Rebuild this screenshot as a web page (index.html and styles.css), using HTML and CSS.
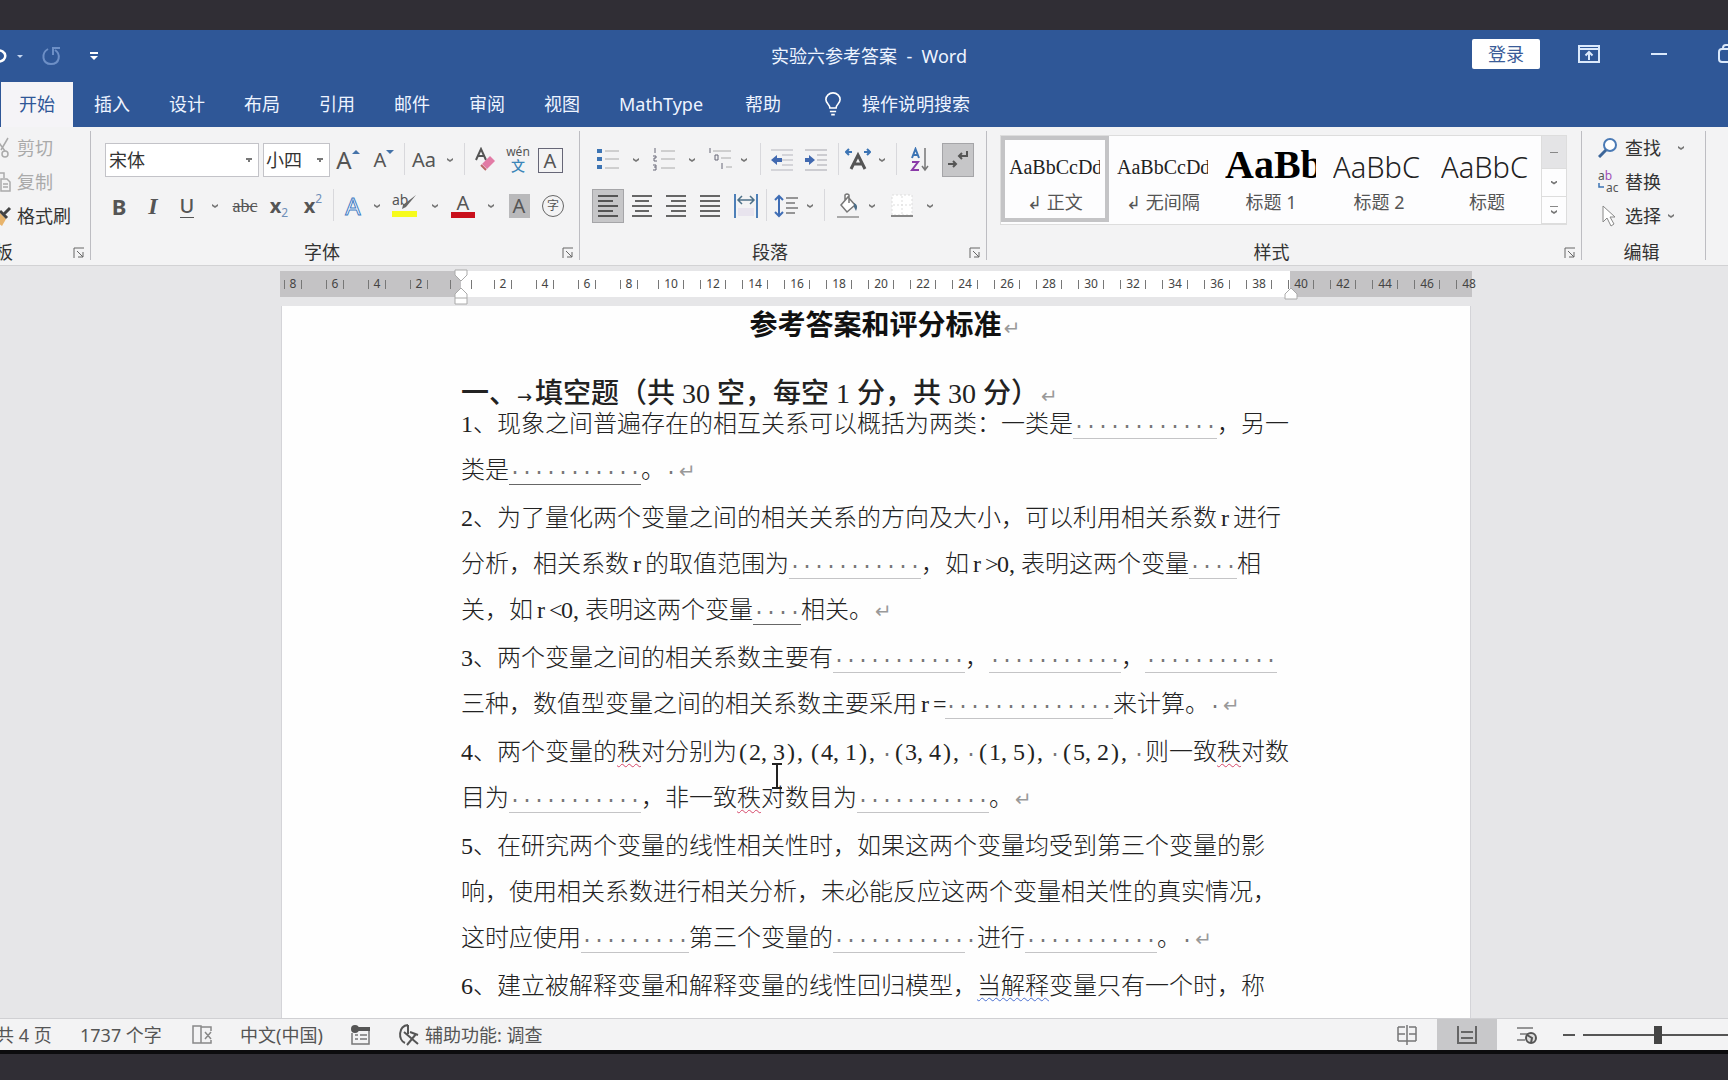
FILE: index.html
```html
<!DOCTYPE html>
<html lang="zh-CN">
<head>
<meta charset="utf-8">
<title>实验六参考答案 - Word</title>
<link rel="stylesheet" href="styles.css">
</head>
<body>
<header class="titlebar">
  <div class="quick">
    <button class="qbtn undo" aria-label="撤消"><svg width="8" height="20" viewBox="0 0 8 20"><path d="M-4 4.500C8 3 8 16-2 15.500" fill="none" stroke="#fff" stroke-width="2.500"/></svg></button>
    <button class="qbtn w24" aria-label="撤消选项"><i class="tri"></i></button>
    <button class="qbtn w40" aria-label="恢复"><svg width="22" height="22" viewBox="0 0 22 22"><path d="M7 4C0 8 1 19 10 19S20 9 14 5M12 10V3h7" fill="none" stroke="#6d8fc6" stroke-width="2"/></svg></button>
    <button class="qbtn w44" aria-label="自定义快速访问工具栏"><i class="bar"></i><i class="tri big"></i></button>
  </div>
  <div class="doc-title">实验六参考答案&nbsp; -&nbsp; Word</div>
  <div class="window">
    <button class="login">登录</button>
    <button class="qbtn" aria-label="功能区显示选项"><svg width="22" height="18" viewBox="0 0 22 18"><path d="M1 1h20v16H1zM1 4h20" fill="none" stroke="#dbe9fb" stroke-width="2"/><path d="M11 15V7M7.500 10.500L11 7l3.500 3.500" fill="none" stroke="#dbe9fb" stroke-width="2"/></svg></button>
    <button class="qbtn" aria-label="最小化"><svg width="16" height="18"><path d="M0 9h16" stroke="#dbe9fb" stroke-width="2"/></svg></button>
    <button class="qbtn" aria-label="还原"><svg width="22" height="20" viewBox="0 0 22 20"><path d="M5 5V4q0-3 3-3h10q3 0 3 3v9" fill="none" stroke="#dbe9fb" stroke-width="2"/><rect x="1" y="5" width="15" height="13" rx="3" fill="none" stroke="#dbe9fb" stroke-width="2"/></svg></button>
  </div>
</header>

<nav class="tabs">
  <button class="tab active">开始</button>
  <button class="tab">插入</button>
  <button class="tab">设计</button>
  <button class="tab">布局</button>
  <button class="tab">引用</button>
  <button class="tab">邮件</button>
  <button class="tab">审阅</button>
  <button class="tab">视图</button>
  <button class="tab wide">MathType</button>
  <button class="tab">帮助</button>
  <button class="tell"><svg width="18" height="24" viewBox="0 0 20 27"><path d="M6.500 18C6.500 14 2 13 2 8.500a8 7.500 0 0 1 16 0C18 13 13.500 14 13.500 18zM6.500 22h7M8 25.500h4" fill="none" stroke="#fff" stroke-width="1.800"/></svg><span>操作说明搜索</span></button>
</nav>

<section class="ribbon">
  <div class="group clip">
    <div class="stack">
      <button class="cmd off"><svg width="12" height="24" viewBox="0 0 12 24"><path d="M8 2L1 14M-3 4L5 15" stroke="#aaa" stroke-width="1.500"/><circle cx="5" cy="18" r="3" fill="none" stroke="#aaa" stroke-width="1.500"/></svg>剪切</button>
      <button class="cmd off"><svg width="12" height="24" viewBox="0 0 12 24"><path d="M-2 3h6v5M1 9h6l3 3v9H1zM3 14h5M3 17h5" fill="none" stroke="#aaa" stroke-width="1.500"/></svg>复制</button>
      <button class="cmd"><svg width="12" height="24" viewBox="0 0 12 24"><path d="M0 9l6 6-4 7-5-4z" fill="#e8b46c"/><path d="M0 7l7 7M4 10l6-6" stroke="#444" stroke-width="3"/></svg>格式刷</button>
    </div>
    <div class="foot"><span>剪贴板</span><button class="launch" aria-label="剪贴板选项"><svg width="12" height="12"><path d="M1 11V1h10M4 4l6 6M10 5v5H5" fill="none" stroke="#666"/></svg></button></div>
  </div>

  <div class="group font">
    <div class="row inset">
      <select class="box face" aria-label="字体"><option>宋体</option></select>
      <select class="box size" aria-label="字号"><option>小四</option></select>
      <button class="t w36" aria-label="增大字号"><span class="a24">A</span><svg class="up" width="8" height="6"><path d="M0 5l4-4 4 4z" fill="#4472a8"/></svg></button>
      <button class="t w36" aria-label="减小字号"><span class="a20">A</span><svg class="up" width="8" height="6"><path d="M0 1l4 4 4-4z" fill="#4472a8"/></svg></button>
      <i class="sep w4"></i>
      <button class="t w36 a20">Aa</button><button class="t w16" aria-label="更改大小写"><i class="v"></i></button>
      <i class="sep w12"></i>
      <button class="t w32" aria-label="清除格式"><svg width="22" height="26" viewBox="0 0 22 26"><path d="M1 13L6 2l5 11M3 9h6" fill="none" stroke="#555" stroke-width="2"/><path d="M7 17l8-8 5 5-8 8z" fill="#e27ba5"/><path d="M6 18l5 5" stroke="#b66" stroke-width="2"/></svg></button>
      <button class="t w32 pin"><span>wén</span><b>文</b></button>
      <button class="t w32"><span class="boxed">A</span></button>
    </div>
    <div class="row">
      <button class="t w32"><b class="a22">B</b></button>
      <button class="t w36"><b class="ital">I</b></button>
      <button class="t w32"><span class="under">U</span></button><button class="t w24" aria-label="下划线"><i class="v"></i></button>
      <button class="t w36"><s class="strike">abc</s></button>
      <button class="t w32 a20"><b>x</b><sub>2</sub></button>
      <button class="t w36 a20"><b>x</b><sup>2</sup></button>
      <i class="sep w4"></i>
      <button class="t w36"><span class="outline">A</span></button><button class="t w12" aria-label="文本效果"><i class="v"></i></button>
      <button class="t w44" aria-label="突出显示"><svg width="26" height="26" viewBox="0 0 26 26"><text x="0" y="12" class="abt">ab</text><path d="M24 2L14 14l-4 2 1-4z" fill="#666"/><path d="M0 18h25v6H0z" fill="#f6fb1c"/></svg></button><button class="t w16" aria-label="突出显示颜色"><i class="v"></i></button>
      <button class="t w40"><span class="red">A</span></button><button class="t w16" aria-label="字体颜色"><i class="v"></i></button>
      <button class="t w40"><span class="shade">A</span></button>
      <button class="t w28"><span class="ring">字</span></button>
    </div>
    <div class="foot"><span>字体</span><button class="launch" aria-label="字体选项"><svg width="12" height="12"><path d="M1 11V1h10M4 4l6 6M10 5v5H5" fill="none" stroke="#666"/></svg></button></div>
  </div>

  <div class="group para">
    <div class="row">
      <button class="t w32" aria-label="项目符号"><svg width="24" height="24"><path d="M1 3h5M1 11h5M1 19h5" stroke="#3c74b4" stroke-width="4"/><path d="M9 3h14M9 11h14M9 20h14" stroke="#aaa" stroke-width="1"/></svg></button><button class="t w24" aria-label="项目符号库"><i class="v"></i></button>
      <button class="t w32" aria-label="编号"><svg width="24" height="24"><path d="M3 0v5M1 8h3v2H2v3h3M1 17h3v5H1M2 19h2" fill="none" stroke="#667" stroke-width="1"/><path d="M9 3h14M9 11h14M9 20h14" stroke="#aaa" stroke-width="1"/></svg></button><button class="t w24" aria-label="编号库"><i class="v"></i></button>
      <button class="t w32" aria-label="多级列表"><svg width="24" height="24"><path d="M2 0v5M7 7h3v5H7zM14 15v6" fill="none" stroke="#667" stroke-width="1"/><path d="M5 3h18M13 10h10M18 19h6" stroke="#aaa" stroke-width="1"/></svg></button><button class="t w16" aria-label="列表库"><i class="v"></i></button>
      <i class="sep w16"></i>
      <button class="t w28" aria-label="减少缩进"><svg width="24" height="24"><path d="M1 2h22M12 7h11M12 12h11M12 17h11M1 22h22" stroke="#b5b5bd"/><path d="M1 12l6-5v3h5v4H7v3z" fill="#4169b0"/></svg></button>
      <button class="t w40" aria-label="增加缩进"><svg width="24" height="24"><path d="M1 2h22M13 7h10M13 12h10M13 17h10M1 22h22" stroke="#a5a5ad"/><path d="M11 12L5 7v3H1v4h4v3z" fill="#4169b0"/></svg></button>
      <i class="sep w4"></i>
      <button class="t w36" aria-label="中文版式"><svg width="26" height="24" viewBox="0 0 26 24"><path d="M6 21l7-14 7 14M8 16h10" fill="none" stroke="#555" stroke-width="3"/><path d="M1 4h6M19 4h6M4 1L1 4l3 3M22 1l3 3-3 3" fill="none" stroke="#3c74b4" stroke-width="2"/></svg></button><button class="t w12" aria-label="版式选项"><i class="v"></i></button>
      <i class="sep w16"></i>
      <button class="t w32" aria-label="排序"><svg width="20" height="26" viewBox="0 0 20 26"><path d="M2 11l3.500-9L9 11M3 8h5" fill="none" stroke="#3c74b4" stroke-width="2"/><path d="M2 15h6l-6 8h7" fill="none" stroke="#8a3aa8" stroke-width="2"/><path d="M15 1v22M12 19l3 4 3-4" fill="none" stroke="#777" stroke-width="1.500"/></svg></button>
      <i class="gap6"></i>
      <button class="t w32 on" aria-label="显示编辑标记"><svg width="24" height="24"><path d="M21 3v5h-8M16 5l-3 3 3 3M2 16h8M7 13l3 3-3 3" fill="none" stroke="#555" stroke-width="2"/></svg></button>
    </div>
    <div class="row">
      <button class="t w32 on" aria-label="左对齐"><svg width="22" height="24"><path d="M1 2h20M1 7h15M1 12h20M1 17h15M1 22h20" stroke="#555" stroke-width="2"/></svg></button>
      <button class="t w36" aria-label="居中"><svg width="22" height="24"><path d="M1 2h20M4 7h14M1 12h20M4 17h14M1 22h20" stroke="#666" stroke-width="2"/></svg></button>
      <button class="t w32" aria-label="右对齐"><svg width="22" height="24"><path d="M1 2h20M6 7h15M1 12h20M6 17h15M1 22h20" stroke="#666" stroke-width="2"/></svg></button>
      <button class="t w36" aria-label="两端对齐"><svg width="22" height="24"><path d="M1 2h20M1 7h20M1 12h20M1 17h20M1 22h20" stroke="#666" stroke-width="2"/></svg></button>
      <button class="t w36" aria-label="分散对齐"><svg width="24" height="24"><path d="M1 0v24M23 0v24" stroke="#4d7fb8" stroke-width="2"/><path d="M4 6h16M8 2L4 6l4 4M16 2l4 4-4 4" fill="none" stroke="#4d7088" stroke-width="1.500"/><path d="M4 14h16v8H4z" fill="#e8e4ee"/></svg></button>
      <i class="sep w4"></i>
      <button class="t w36" aria-label="行距"><svg width="24" height="24"><path d="M5 2v20M1 6l4-4 4 4M1 18l4 4 4-4" fill="none" stroke="#3f6db5" stroke-width="2"/><path d="M12 4h12M12 9h9M12 14h12M12 19h9" stroke="#777" stroke-width="1.500"/></svg></button><button class="t w12" aria-label="行距选项"><i class="v"></i></button>
      <i class="sep w16"></i>
      <button class="t w32" aria-label="底纹"><svg width="24" height="26" viewBox="0 0 24 26"><path d="M12 4l7 8-8 7-6-7zM9 7V2q2-2 4 0v8" fill="#fff" stroke="#777" stroke-width="1.500"/><path d="M18 10q5 2 2 8l-2-4z" fill="#4d6e88"/><path d="M1 23h22v2H1z" fill="#aaa"/></svg></button><button class="t w16" aria-label="底纹颜色"><i class="v"></i></button>
      <button class="t w44" aria-label="边框"><svg width="24" height="24"><path d="M2 1h20v20H2z" fill="#fff" stroke="#ddd" stroke-dasharray="2 2"/><path d="M12 2v18M3 11h18" stroke="#ddd" stroke-dasharray="2 2"/><path d="M1 22h22" stroke="#888" stroke-width="2"/></svg></button><button class="t w12" aria-label="边框选项"><i class="v"></i></button>
    </div>
    <div class="foot"><span>段落</span><button class="launch" aria-label="段落选项"><svg width="12" height="12"><path d="M1 11V1h10M4 4l6 6M10 5v5H5" fill="none" stroke="#666"/></svg></button></div>
  </div>

  <div class="group styles">
    <div class="gallery">
      <button class="style sel"><span class="sample song">AaBbCcDd</span><span class="nm">↲ 正文</span></button>
      <button class="style"><span class="sample song">AaBbCcDd</span><span class="nm">↲ 无间隔</span></button>
      <button class="style"><span class="sample h1s">AaBb</span><span class="nm">标题 1</span></button>
      <button class="style"><span class="sample h2s">AaBbC</span><span class="nm">标题 2</span></button>
      <button class="style"><span class="sample h2s">AaBbC</span><span class="nm">标题</span></button>
      <div class="scroller">
        <button class="dim" aria-label="上一行"><i class="bar gray"></i></button>
        <button aria-label="下一行"><i class="v"></i></button>
        <button aria-label="其他"><i class="bar gray"></i><i class="v"></i></button>
      </div>
    </div>
    <div class="foot"><span>样式</span><button class="launch" aria-label="样式选项"><svg width="12" height="12"><path d="M1 11V1h10M4 4l6 6M10 5v5H5" fill="none" stroke="#666"/></svg></button></div>
  </div>

  <div class="group edit">
    <div class="stack">
      <button class="cmd"><svg width="20" height="20"><circle cx="12" cy="7" r="6" fill="#fff" stroke="#4a7ab5" stroke-width="2"/><path d="M8 12l-7 7" stroke="#3d6699" stroke-width="3"/></svg>查找<i class="v far"></i></button>
      <button class="cmd"><svg width="22" height="24"><text x="0" y="10" class="rep"><tspan>a</tspan><tspan fill="#a04fb8">b</tspan></text><text x="8" y="22" class="rep">ac</text><path d="M1 13v4h5" fill="none" stroke="#3c74b4" stroke-width="1.500"/></svg>替换</button>
      <button class="cmd"><svg width="20" height="22"><path d="M5 1v16l4-4 4 8 3-2-4-7h5z" fill="#fff" stroke="#888"/></svg>选择<i class="v near"></i></button>
    </div>
    <div class="foot"><span>编辑</span></div>
  </div>
</section>

<main class="canvas">
  <div class="sheet">
    <div class="ruler">
      <div class="ticks"><span>8</span><span>6</span><span>4</span><span>2</span><span></span><span>2</span><span>4</span><span>6</span><span>8</span><span>10</span><span>12</span><span>14</span><span>16</span><span>18</span><span>20</span><span>22</span><span>24</span><span>26</span><span>28</span><span>30</span><span>32</span><span>34</span><span>36</span><span>38</span><span>40</span><span>42</span><span>44</span><span>46</span><span>48</span></div>
      <svg class="mark left" width="14" height="36"><path d="M1 1h12v5l-6 6-6-6zM7 19l6 6v10H1V25zM1 29h12" fill="#fff" stroke="#aaa"/></svg>
      <svg class="mark right" width="14" height="36"><path d="M7 19l6 6v5H1v-5z" fill="#fff" stroke="#aaa"/></svg>
    </div>
    <article class="page">
      <h1>参考答案和评分标准<span class="ret">↵</span></h1>
      <h2>一、<span class="tab-mark">→</span>填空题（共 30 空，每空 1 分，共 30 分）<span class="ret">↵</span></h2>
      <p>1、现象之间普遍存在的相互关系可以概括为两类：一类是<u>············</u>，另一<br>类是<u class="dk">···········</u>。<q>·</q><span class="ret">↵</span></p>
      <p>2、为了量化两个变量之间的相关关系的方向及大小，可以利用相关系数<i class="r">r</i>进行<br>分析，相关系数<i class="r">r</i>的取值范围为<u>···········</u>，如<i class="r">r</i><i>&gt;</i>0<i class="c">,</i>表明这两个变量<u>····</u>相<br>关，如<i class="r">r</i><i>&lt;</i>0<i class="c">,</i>表明这两个变量<u class="dk">····</u>相关。<span class="ret">↵</span></p>
      <p>3、两个变量之间的相关系数主要有<u>···········</u>，<u>···········</u>，<u>···········</u><br>三种，数值型变量之间的相关系数主要采用<i class="r">r</i><i>=</i><u>··············</u>来计算。<q>·</q><span class="ret">↵</span></p>
      <p>4、两个变量的<em>秩</em>对分别为<i>(</i>2<i class="c">,</i>3<i>)</i><i class="c">,</i><i>(</i>4<i class="c">,</i>1<i>)</i><i class="c">,</i><q>·</q><i>(</i>3<i class="c">,</i>4<i>)</i><i class="c">,</i><q>·</q><i>(</i>1<i class="c">,</i>5<i>)</i><i class="c">,</i><q>·</q><i>(</i>5<i class="c">,</i>2<i>)</i><i class="c">,</i><q>·</q>则一致<em>秩</em>对数<br>目为<u>···········</u>，非一致<em>秩</em>对数目为<u>···········</u>。<span class="ret">↵</span></p>
      <p>5、在研究两个变量的线性相关性时，如果这两个变量均受到第三个变量的影<br>响，使用相关系数进行相关分析，未必能反应这两个变量相关性的真实情况，<br>这时应使用<u>·········</u>第三个变量的<u>···········</u><q>·</q>进行<u>···········</u>。<q>·</q><span class="ret">↵</span></p>
      <p>6、建立被解释变量和解释变量的线性回归模型，<em class="blue">当解释</em>变量只有一个时，称</p>
      <svg class="ibeam" width="14" height="28"><path d="M2 2h10M2 26h10M7 2v24" stroke="#222" stroke-width="2"/></svg>
    </article>
  </div>
</main>

<footer class="status">
  <span class="pages">共 4 页</span>
  <span class="words">1737 个字</span>
  <svg class="proof" width="22" height="20"><path d="M1 1h8v17H1zM9 2h10v4M9 18h10v-3M13 7l6 7M19 7l-6 7" fill="none" stroke="#888" stroke-width="1.500"/></svg>
  <span class="lang">中文(中国)</span>
  <svg class="macro" width="20" height="20"><circle cx="5" cy="4" r="4" fill="#555"/><path d="M8 4h12" stroke="#555" stroke-width="4"/><path d="M2 8v11h17V6M5 10h3M10 10h7M5 14h3M10 14h7" fill="none" stroke="#777" stroke-width="1.500"/></svg>
  <svg class="acc" width="24" height="24"><path d="M10 2C0 3 0 17 7 20M10 2v9M6 9l14 12M18 11L9 22M12 9l8 3" fill="none" stroke="#555" stroke-width="2"/></svg>
  <span class="access">辅助功能: 调查</span>
  <div class="views">
    <button class="view" aria-label="阅读视图"><svg width="20" height="20"><path d="M10 0v20M1 2h7M12 2h7M1 9h7M12 9h7M1 16h18M1 2v14M19 2v14" stroke="#777" stroke-width="1.500"/></svg></button>
    <button class="view on" aria-label="页面视图"><svg width="20" height="20"><path d="M1 1v17h18V1M4 7h12M4 13h12" fill="none" stroke="#666" stroke-width="2"/></svg></button>
    <button class="view" aria-label="Web 版式视图"><svg width="22" height="20"><path d="M1 3h16M4 9h8M1 15h8" stroke="#777" stroke-width="1.500"/><circle cx="15" cy="13" r="5" fill="#ddd" stroke="#555" stroke-width="2"/><path d="M11 10l5 3-1 5" fill="none" stroke="#555" stroke-width="2"/></svg></button>
    <button class="minus" aria-label="缩小"><svg width="12" height="4"><path d="M0 2h12" stroke="#555" stroke-width="2"/></svg></button>
    <input class="zoom" type="range" min="0" max="100" value="50" aria-label="缩放">
  </div>
</footer>
</body>
</html>
```
FILE: styles.css
```css
* { box-sizing: border-box; }
body {
  margin: 0;
  height: 100vh;
  padding: 30px 0 26px;
  display: flex;
  flex-direction: column;
  overflow: hidden;
  background: #302e35;
  color: #333;
  font: 18px/24px "Noto Sans", "Noto Sans CJK SC", sans-serif;
  text-spacing-trim: space-all;
}
button {
  margin: 0;
  padding: 0;
  border: 0;
  background: none;
  color: inherit;
  font: inherit;
  white-space: nowrap;
}
svg { flex: none; }

/* title bar */
.titlebar {
  flex: none;
  height: 52px;
  display: grid;
  grid-template-columns: 1fr auto 1fr;
  align-items: center;
  background: #2f5797;
  color: #eef4ff;
}
.quick { display: flex; height: 24px; align-items: center; }
.qbtn { display: flex; flex-direction: column; align-items: center; justify-content: center; gap: 2px; }
.undo { width: 8px; align-items: flex-start; }
.tri { border: 3px solid transparent; border-top: 3px solid #c5d6f0; border-bottom: 0; }
.tri.big { border-width: 4px; border-top-color: #fff; border-bottom: 0; }
.bar { width: 8px; height: 2px; background: #fff; }
.bar.gray { height: 1px; background: #888; }
.doc-title { padding-left: 10px; }
.window { display: flex; align-items: center; justify-content: flex-end; margin-right: -12px; padding-bottom: 4px; }
.login { width: 68px; height: 30px; margin-right: 38px; border-radius: 2px; background: #fff; color: #3a5c98; line-height: 28px; }
.window .qbtn + .qbtn { margin-left: 51px; }

/* tabs */
.tabs { flex: none; display: flex; gap: 3px; height: 45px; padding-left: 1px; background: #2f5797; color: #eef4ff; }
.tab { padding: 0 18px 2px; }
.tab.wide { padding: 0 21px 2px 18px; }
.tab.active { background: #f5f4f7; color: #2f5797; }
.tell { display: flex; align-items: center; gap: 20px; padding: 0 0 2px 22px; }

/* ribbon */
.ribbon { flex: none; display: flex; height: 139px; padding-top: 4px; background: #f3f3f4; border-bottom: 1px solid #d2d2d4; }
.group { flex: none; display: flex; flex-direction: column; height: 129px; padding: 12px 0 0 12px; border-right: 1px solid #bdbdc2; }
.clip { width: 91px; padding: 0; }
.font { width: 489px; }
.para { width: 407px; }
.styles { width: 595px; padding: 4px 0 0 13px; }
.edit { width: 124px; padding: 0 0 0 16px; }
.row { display: flex; height: 34px; margin-bottom: 12px; }
.inset { padding-left: 2px; }
.foot { display: flex; justify-content: center; align-items: center; height: 24px; margin: auto 0 -4px -12px; padding-right: 26px; position: relative; }
.clip .foot { margin-left: 0; justify-content: flex-start; text-indent: -41px; }
.edit .foot { margin-left: -16px; padding-right: 4px; }
.launch { position: absolute; right: 5px; top: 7px; width: 12px; height: 12px; line-height: 0; text-indent: 0; }
.stack { display: flex; flex-direction: column; }
.cmd { display: flex; align-items: center; height: 34px; gap: 5px; }
.clip .cmd svg { width: 12px; }
.cmd.off { color: #aaa; }
.edit .cmd { gap: 5px; }
.edit .cmd svg { width: 22px; }
.far { margin-left: 12px; }
.near { margin-left: 2px; }
.box { appearance: none; height: 34px; padding: 0 3px; border: 1px solid #c3c3c8; border-radius: 0; color: #333; font: inherit;
  background: linear-gradient(#777, #777) right 8px top 16px / 2px 2px no-repeat, linear-gradient(#777, #777) right 6px top 14px / 6px 2px no-repeat, #fff; }
.face { width: 154px; margin-right: 4px; }
.size { width: 67px; padding: 0 2px; }
.t { flex: none; display: flex; align-items: center; justify-content: center; color: #555; }
.t.on { background: #c6c6c8; border: 1px solid #a5a5a8; }
.w4 { width: 4px; }
.w12 { width: 12px; }
.w16 { width: 16px; }
.w24 { width: 24px; }
.w28 { width: 28px; }
.w32 { width: 32px; }
.w36 { width: 36px; }
.w40 { width: 40px; }
.w44 { width: 44px; }
.gap6 { width: 6px; }
.sep { height: 32px; background: linear-gradient(#d8d8dc, #d8d8dc) center / 1px 100% no-repeat; }
.v { width: 6px; height: 4px; background: #777; clip-path: polygon(0 0, 50% 50%, 100% 0, 100% 50%, 50% 100%, 0 50%); }
.up { align-self: flex-start; margin-top: 6px; }
.a20 { font-size: 20px; }
.a22 { font-size: 22px; }
.a24 { font-size: 24px; }
.t sub, .t sup { font-size: 12px; line-height: 12px; color: #6f8fb8; }
.t sub { align-self: flex-end; margin-bottom: 4px; }
.t sup { align-self: flex-start; margin-top: 4px; }
.ital { font: italic bold 24px/24px "Liberation Serif", serif; }
.under { font-weight: 500; border-bottom: 1px solid #555; font-size: 20px; line-height: 22px; }
.strike { font: 18px/24px "Liberation Serif", serif; }
.outline { font-size: 24px; color: #fff; -webkit-text-stroke: 1px #3f7cc4; }
.red { width: 24px; font-size: 20px; line-height: 18px; border-bottom: 6px solid #c9101c; text-align: center; }
.shade { width: 21px; background: #b9b9bb; font-size: 20px; line-height: 24px; }
.ring { width: 22px; height: 22px; border: 1px solid #666; border-radius: 50%; font-size: 12px; line-height: 20px; }
.boxed { width: 25px; border: 1px solid #667; font-size: 20px; line-height: 23px; }
.pin { flex-direction: column; font-size: 12px; line-height: 12px; }
.pin b { color: #3c86b8; font-size: 14px; font-weight: 500; line-height: 16px; }
.abt { font: 14px "Noto Sans", sans-serif; fill: #555; }
.rep { font: 12px "Noto Sans", sans-serif; fill: #555; }

/* style gallery */
.gallery { display: flex; width: 567px; height: 90px; background: #fdfdfe; border: 1px solid #ddd; }
.style { width: 108px; height: 86px; padding: 0 4px; overflow: hidden; display: flex; flex-direction: column; border: 4px solid transparent; }
.style.sel { border-color: #c4c4c6; }
.sample { width: 91px; height: 46px; line-height: 54px; overflow: hidden; color: #222; text-align: left; }
.song { font-family: "Liberation Serif", serif; font-size: 20px; }
.h1s { font: bold 40px/50px "Liberation Serif", serif; color: #000; }
.h2s { font-size: 29px; font-weight: 300; }
.nm { align-self: center; color: #555; line-height: 32px; }
.scroller { flex: 1; display: grid; grid-template-rows: 33px 28px 27px; border-left: 1px solid #ddd; }
.scroller button { display: flex; flex-direction: column; align-items: center; justify-content: center; gap: 3px; border-bottom: 1px solid #ddd; }
.dim { background: #e4e4e6; }

/* document */
.canvas { flex: 1; min-height: 0; overflow: hidden; display: flex; justify-content: center; padding-left: 24px; background: #e6e6e8; }
.sheet { flex: none; width: 1190px; display: flex; flex-direction: column; }
.ruler { position: relative; flex: none; height: 26px; margin: 5px 0 9px -1px; width: 1192px;
  background: linear-gradient(90deg, #c4c3c5 181px, #fff 181px, #fff 1010px, #c4c3c5 1010px); }
.ticks { display: flex; font-size: 12px; line-height: 26px; color: #444; }
.ticks span { flex: none; width: 42px; display: flex; justify-content: center; align-items: center; gap: 5px; }
.ticks span:first-child { margin-left: -8px; }
.ticks span::before, .ticks span::after { content: ""; width: 1px; height: 9px; background: #777; }
.ticks span:empty { gap: 20px; }
.ticks span:last-child::after { visibility: hidden; }
.mark { position: absolute; top: -2px; }
.mark.left { left: 174px; }
.mark.right { left: 1004px; }
.page { position: relative; flex: 1; min-height: 0; padding: 0 179px; background: #fefefe; border: solid #d4d4d8; border-width: 0 1px;
  color: #222; font: 300 24px/46px "Liberation Serif", "Noto Sans CJK SC", serif; white-space: nowrap; }
.page h1 { margin: 0; padding-left: 18px; text-align: center; color: #111; font: bold 28px/39px "Liberation Serif", "Noto Sans CJK SC", serif; }
.page h2 { margin: 34px 0 -8px; color: #222; font: 500 28px/30px "Liberation Serif", "Noto Sans CJK SC", serif; }
.page p { margin: 0 0 2px; }
.tab-mark { display: inline-block; width: 18px; font: 18px/24px "DejaVu Sans", sans-serif; }
.ret { display: inline-block; margin-left: 2px; color: #999; font: 20px/24px "DejaVu Sans", sans-serif; }
.page u, .page q { font: 20px/24px "Liberation Mono", monospace; text-decoration: none; quotes: none; color: #777; }
.page u { border-bottom: 1px solid #c4c4c6; }
.page u.dk { border-color: #666; }
.page i { display: inline-block; width: 12px; font-style: normal; text-align: center; }
.page i.c { text-align: left; }
.page i.r { margin: 0 2px; }
.page em { font-style: normal; text-decoration: underline wavy #d5486a 1px; text-underline-offset: 3px; }
.page em.blue { text-decoration-color: #4a6fd0; }
.ibeam { position: absolute; left: 488px; top: 456px; }

/* status bar */
.status { flex: none; display: flex; align-items: center; height: 36px; border-top: 1px solid #d0d0d3; border-bottom: 4px solid #0c0c0e; background: #f3f3f4; color: #555; white-space: nowrap; }
.pages { margin-left: -4px; width: 84px; }
.words { width: 112px; }
.proof { margin-right: 26px; }
.lang { width: 110px; }
.macro { margin-right: 28px; }
.acc { margin-right: 3px; }
.views { display: flex; align-self: stretch; align-items: center; margin-left: auto; margin-right: -5px; }
.view { display: flex; align-items: center; justify-content: center; width: 60px; height: 100%; }
.view.on { background: #c8c8ca; }
.minus { display: flex; width: 20px; margin: 0 0 0 6px; }
.zoom { appearance: none; width: 150px; height: 20px; margin: 0; background: linear-gradient(#555, #555) center / 100% 2px no-repeat; }
.zoom::-webkit-slider-thumb { appearance: none; width: 8px; height: 18px; background: #444; }
```
